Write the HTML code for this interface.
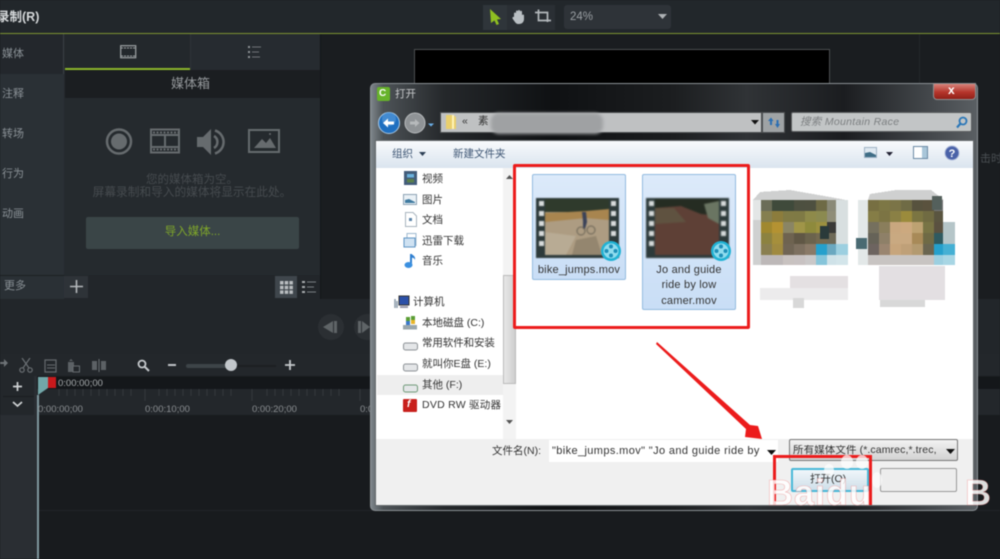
<!DOCTYPE html>
<html><head><meta charset="utf-8"><style>
html,body{margin:0;padding:0;background:#1a1d20;}
#r{position:relative;width:1000px;height:559px;overflow:hidden;background:#1a1d20;font-family:"Liberation Sans","Noto Sans CJK SC",sans-serif;filter:blur(0.45px);}
#r div,#r svg{position:absolute;}
.t{white-space:nowrap;line-height:1;}
.side{left:2px;color:#8a9196;font-size:11px;}
.nav{left:422px;color:#333;font-size:10.5px;}
.file{color:#333;font-size:11px;text-align:center;line-height:15.3px;letter-spacing:.2px;}
</style></head><body><div id="r">
<!-- top bar -->
<div style="left:0;top:0;width:1000px;height:33px;background:#22272b"></div>
<div style="left:0;top:33px;width:1000px;height:1px;background:#7d9331"></div>
<div class="t" style="left:-3px;top:11px;color:#d6d9db;font-size:12.5px;font-weight:bold">录制(R)</div>
<div style="left:483px;top:5px;width:24px;height:25px;background:#2f353a"></div>
<div style="left:507px;top:5px;width:48px;height:25px;background:#2a2f34"></div>
<svg style="left:488px;top:8px" width="15" height="18" viewBox="0 0 15 18"><path d="M2 1L13 11L9 11.500L11 16L8.500 17L6.500 12.500L3 15Z" fill="#8fbf21"/></svg>
<svg style="left:511px;top:8px" width="16" height="17" viewBox="0 0 16 17"><path d="M3 8V5.500a1 1 0 012 0V3.500a1 1 0 012 0V3a1 1 0 012 0v.8a1 1 0 012 0V7.500a1 1 0 012 0V11c0 3-2 5-5 5H7C5 16 4 14 1.500 10.500C1 9 2.500 8.500 3 9Z" fill="#b9bfc3"/></svg>
<svg style="left:534px;top:9px" width="18" height="16" viewBox="0 0 18 16"><path d="M1 3.500H13.500V13M4.500 0.500V11.500H17" fill="none" stroke="#b3b8bc" stroke-width="1.700"/></svg>
<div style="left:564px;top:5px;width:107px;height:24px;background:#2e3338;border-radius:3px"></div>
<div class="t" style="left:570px;top:12px;color:#9a9fa3;font-size:11.500px">24%</div>
<svg style="left:658px;top:14px" width="9" height="6"><path d="M0 0H9L4.500 5Z" fill="#aeb2b5"/></svg>

<!-- left sidebar -->
<div style="left:0;top:34px;width:64px;height:265px;background:#2a3035"></div>
<div style="left:0;top:34px;width:63px;height:40px;background:#23272c"></div>
<div style="left:63px;top:34px;width:1px;height:40px;background:#3a4045"></div>
<div class="t side" style="top:49px">媒体</div>
<div class="t side" style="top:89px">注释</div>
<div class="t side" style="top:129px">转场</div>
<div class="t side" style="top:169px">行为</div>
<div class="t side" style="top:209px">动画</div>
<div style="left:0;top:275px;width:64px;height:1px;background:#1c2023"></div>
<div class="t side" style="left:4px;top:281px">更多</div>

<!-- media panel -->
<div style="left:64px;top:34px;width:256px;height:265px;background:#252a2e"></div>
<div style="left:65px;top:34px;width:125px;height:34px;background:#23282c"></div>
<div style="left:190px;top:34px;width:128px;height:36px;background:#262b30;border-left:1px solid #2e3338"></div>
<div style="left:65px;top:68px;width:125px;height:2px;background:#8cb52b"></div>
<svg style="left:120px;top:45px" width="17" height="14" viewBox="0 0 17 14"><rect x=".7" y=".7" width="15" height="12" fill="none" stroke="#9ea3a6" stroke-width="1.200"/><path d="M1 3H16M1 11H16" stroke="#9ea3a6" stroke-width="1" stroke-dasharray="2 1"/></svg>
<svg style="left:247px;top:45px" width="15" height="15" viewBox="0 0 15 15"><path d="M1 1h2v2H1zM1 6h2v2H1zM1 11h2v2H1z" fill="#8f9498"/><path d="M5 2H14M5 7H12M5 12H13" stroke="#6f7478" stroke-width="1"/></svg>
<div style="left:65px;top:70px;width:255px;height:28px;background:#1b1e21"></div>
<div class="t" style="left:171px;top:77px;color:#94989b;font-size:13px">媒体箱</div>
<svg style="left:105px;top:127px" width="175" height="30" viewBox="0 0 175 30">
<circle cx="14" cy="14.500" r="12" fill="none" stroke="#666b6e" stroke-width="2.500"/><circle cx="14" cy="14.500" r="8" fill="#666b6e"/>
<rect x="46" y="2.500" width="28" height="23" fill="none" stroke="#666b6e" stroke-width="2"/><path d="M47 8H73M47 20H73M60 8V20" stroke="#666b6e" stroke-width="2"/><path d="M48 5.500H73M48 22.500H73" stroke="#666b6e" stroke-width="2" stroke-dasharray="2 1.500"/>
<path d="M92 10H98L106 2V28L98 20H92Z" fill="#666b6e"/><path d="M109 9a7 7 0 010 12M110 3.500a12 12 0 010 23" fill="none" stroke="#666b6e" stroke-width="2.500"/>
<rect x="144" y="3" width="30" height="22" fill="none" stroke="#666b6e" stroke-width="2"/><path d="M149 21L157 12L161 16L165 11L171 21Z" fill="#666b6e"/><circle cx="165" cy="7" r="1" fill="#666b6e"/>
</svg>
<div class="t" style="left:64px;top:175px;width:256px;text-align:center;color:#464b4f;font-size:11.500px">您的媒体箱为空。</div>
<div class="t" style="left:64px;top:187px;width:256px;text-align:center;color:#464b4f;font-size:11.700px">屏幕录制和导入的媒体将显示在此处。</div>
<div style="left:86px;top:217px;width:213px;height:32px;background:#3a4547;border-radius:2px"></div>
<div class="t" style="left:86px;top:227px;width:213px;text-align:center;color:#7fa62a;font-size:11.500px">导入媒体...</div>
<div style="left:64px;top:275px;width:256px;height:24px;background:#22262a"></div>
<div style="left:64px;top:276px;width:24px;height:22px;background:#2e3338"></div>
<svg style="left:69px;top:279px" width="15" height="15"><path d="M7.500 1V14M1 7.500H14" stroke="#b5b9bc" stroke-width="1.600"/></svg>
<div style="left:275px;top:276px;width:22px;height:22px;background:#3f464c"></div>
<svg style="left:280px;top:281px" width="13" height="13"><path d="M0 0h3.500v3.500H0zM4.700 0h3.500v3.500H4.700zM9.400 0h3.500v3.500H9.400zM0 4.700h3.500v3.500H0zM4.700 4.700h3.500v3.500H4.700zM9.400 4.700h3.500v3.500H9.400zM0 9.400h3.500v3.500H0zM4.700 9.400h3.500v3.500H4.700zM9.400 9.400h3.500v3.500H9.400z" fill="#b9bdc0"/></svg>
<svg style="left:302px;top:280px" width="15" height="14"><path d="M0 1h3v2H0zM0 6h3v2H0zM0 11h3v2H0z" fill="#a7abae"/><path d="M5 2H14M5 7H12M5 12H14" stroke="#7a7f83"/></svg>

<!-- canvas -->
<div style="left:320px;top:34px;width:680px;height:265px;background:#1a1d20"></div>
<div style="left:320px;top:34px;width:1px;height:265px;background:#14171a"></div>
<div style="left:414px;top:49px;width:414px;height:40px;background:#000;border:1px solid #4d4f51;border-bottom:none"></div>
<div style="left:919px;top:34px;width:1px;height:265px;background:#22272b"></div>
<div class="t" style="left:980px;top:154px;color:#4a4f53;font-size:11px">击时</div>

<!-- playback strip -->
<div style="left:0;top:299px;width:1000px;height:55px;background:#22262a"></div>
<div style="left:318px;top:314px;width:26px;height:26px;border-radius:13px;background:#2b2f33"></div>
<svg style="left:322px;top:320px" width="16" height="14"><path d="M1 7L11 1V13Z M12 1h3v12h-3z" fill="#5f6467"/></svg>
<div style="left:354px;top:314px;width:16px;height:26px;border-radius:13px 0 0 13px;background:#2b2f33"></div>
<svg style="left:358px;top:320px" width="12" height="14"><path d="M0 1h3v12H0zM4 1L12 7L4 13Z" fill="#5f6467"/></svg>

<!-- timeline toolbar -->
<div style="left:0;top:354px;width:1000px;height:22px;background:#23272b"></div>
<svg style="left:0;top:358px" width="8" height="10"><path d="M0 4H4V1L8 5L4 9V6H0Z" fill="#6d7276"/></svg>
<svg style="left:19px;top:358px" width="14" height="15" viewBox="0 0 14 15" fill="none" stroke="#6a6f73" stroke-width="1.200"><path d="M3 0L10 10M11 0L4 10"/><circle cx="3" cy="12" r="2.200"/><circle cx="11" cy="12" r="2.200"/></svg>
<svg style="left:44px;top:359px" width="14" height="14"><rect x="1" y="1" width="11" height="12" fill="none" stroke="#666b6f" stroke-width="1.200"/><path d="M3 6H11M3 9H11" stroke="#666b6f"/></svg>
<svg style="left:67px;top:358px" width="14" height="15"><path d="M1 4H7V14H1zM4 1L6 3H2Z" fill="#5c6165"/><rect x="6" y="8" width="6.500" height="6" fill="#23272b" stroke="#666b6f"/></svg>
<svg style="left:91px;top:359px" width="16" height="13"><rect x="1" y="2" width="5" height="9" fill="#5c6165"/><rect x="10" y="2" width="5" height="9" fill="#5c6165"/><path d="M8 0V13" stroke="#6d7276"/></svg>
<svg style="left:137px;top:359px" width="13" height="13"><circle cx="5" cy="5" r="3.500" fill="none" stroke="#c5c9cc" stroke-width="1.800"/><path d="M7.500 7.500L12 12" stroke="#c5c9cc" stroke-width="2"/></svg>
<div style="left:168px;top:364px;width:8px;height:2px;background:#bfc3c6"></div>
<div style="left:186px;top:364px;width:45px;height:4px;border-radius:2px;background:#3d4448"></div>
<div style="left:231px;top:365px;width:45px;height:2px;background:#1c1f22"></div>
<div style="left:225px;top:359px;width:12px;height:12px;border-radius:6px;background:#c2c7cb"></div>
<svg style="left:285px;top:360px" width="10" height="10"><path d="M5 0V10M0 5H10" stroke="#c5c9cc" stroke-width="1.800"/></svg>

<!-- timeline -->
<div style="left:0;top:376px;width:37px;height:183px;background:#2a2e33"></div>
<div style="left:0;top:376px;width:34px;height:39px;background:#23272b"></div>
<div style="left:3px;top:396px;width:31px;height:1px;background:#1a1d20"></div>
<svg style="left:12px;top:381px" width="11" height="11"><path d="M5.500 1V10M1 5.500H10" stroke="#d0d3d5" stroke-width="1.700"/></svg>
<svg style="left:12px;top:401px" width="11" height="7"><path d="M1 1L5.500 5L10 1" fill="none" stroke="#d0d3d5" stroke-width="1.700"/></svg>
<div style="left:37px;top:376px;width:963px;height:183px;background:#181b1e"></div>
<div style="left:37px;top:377px;width:963px;height:12px;background:#14171a"></div>
<div style="left:37px;top:389px;width:963px;height:26px;background:#23272b"></div>
<svg style="left:37px;top:389px" width="333" height="12"><path d="M22 0V7M30 0V7M38 0V7M46 0V7M54 0V7M62 0V7M70 0V7M78 0V7M86 0V7M94 0V7M108 0V12M122 0V7M130 0V7M138 0V7M146 0V7M154 0V7M162 0V7M170 0V7M178 0V7M186 0V7M194 0V7M215 0V12M230 0V7M238 0V7M246 0V7M254 0V7M262 0V7M270 0V7M278 0V7M286 0V7M294 0V7M302 0V7M323 0V12" stroke="#34393d"/></svg>
<div style="left:37px;top:510px;width:963px;height:1px;background:#212428"></div>
<svg style="left:38px;top:377px" width="18" height="18"><path d="M0 0H10V11L0 18Z" fill="#72a6a8"/></svg>
<div style="left:48px;top:377px;width:8px;height:11px;background:#c8191c"></div>
<div style="left:37px;top:395px;width:2px;height:164px;background:#7f979e"></div>
<div class="t" style="left:58px;top:379px;color:#a8acae;font-size:9.500px">0:00:00;00</div>
<div class="t" style="left:38px;top:405px;color:#8b8f92;font-size:9.500px">0:00:00;00</div>
<div class="t" style="left:145px;top:405px;color:#8b8f92;font-size:9.500px">0:00:10;00</div>
<div class="t" style="left:252px;top:405px;color:#8b8f92;font-size:9.500px">0:00:20;00</div>
<div class="t" style="left:360px;top:405px;color:#8b8f92;font-size:9.500px">0:00:30;00</div>
<div style="left:975px;top:389px;width:25px;height:26px;background:#23272b"></div>

<!-- dialog -->
<div style="left:370px;top:83px;width:608px;height:428px;border-radius:5px;background:linear-gradient(90deg,#7d858a 0,#4d5357 2%,#25282b 12%,#0f1113 30%,#1c1e20 50%,#303336 62%,#1b1d20 78%,#5a5f63 100%);border:1px solid #8a9094;box-sizing:border-box"></div>
<div style="left:375px;top:103px;width:1px;height:403px;background:#6c7276"></div>
<!-- title -->
<div style="left:377px;top:87px;width:13px;height:14px;background:#67b32a;border-radius:2px"></div>
<div class="t" style="left:379px;top:89px;color:#fff;font-size:10px;font-weight:bold">C</div>
<div class="t" style="left:395px;top:89px;color:#c8cacc;font-size:10.500px">打开</div>
<div style="left:933px;top:83px;width:43px;height:17px;border-radius:0 0 4px 4px;background:linear-gradient(#d8827a,#b5352b 55%,#902018);border:1px solid #8d8f91;box-sizing:border-box"></div>
<div class="t" style="left:948px;top:84px;color:#fff;font-size:12px;font-weight:bold">x</div>
<!-- nav -->
<svg style="left:378px;top:111px" width="58" height="26" viewBox="0 0 58 26">
<circle cx="11" cy="12" r="10.500" fill="#1f6fc0" stroke="#a8c8e4" stroke-width="1"/><circle cx="11" cy="8" r="7" fill="#5b9fdc" opacity=".6"/><path d="M16 10.500H10V7.500L5 12L10 16.500V13.500H16Z" fill="#fff"/>
<circle cx="37" cy="12" r="10" fill="#8f9396" stroke="#b8bbbd"/><path d="M32 10.500H37V8L41.500 12L37 16V13.500H32Z" fill="#b6b9bb"/>
<path d="M50 12.500H56L53 15.500Z" fill="#6cb0ea"/>
</svg>
<div style="left:440px;top:112px;width:322px;height:21px;background:#bfc1c2;border:1px solid #4b4e50;box-sizing:border-box"></div>
<div style="left:762px;top:112px;width:23px;height:21px;background:#9fa3a5;border:1px solid #4b4e50;box-sizing:border-box"></div>
<svg style="left:445px;top:114px" width="12" height="16"><path d="M1 1H8L11 3V15H1Z" fill="#e9cf6d"/><path d="M7 1H9V15H7Z" fill="#fff3b8"/></svg>
<div class="t" style="left:462px;top:116px;color:#333;font-size:10.500px">«</div>
<div class="t" style="left:478px;top:116px;color:#333;font-size:10.500px">素</div>
<div style="left:491px;top:113px;width:112px;height:21px;background:#9fa1a3;border-radius:8px;filter:blur(1.500px)"></div>
<svg style="left:751px;top:120px" width="8" height="5"><path d="M0 0H8L4 4.500Z" fill="#111"/></svg>
<svg style="left:767px;top:116px" width="14" height="13"><path d="M1 5L4 1.500L6.500 5H5V9H3V5ZM8 8H9.500V4H11.500V8H13L10.500 12Z" fill="#2b6fb3"/></svg>
<div style="left:791px;top:112px;width:181px;height:20px;background:#c2c5c6;border:1px solid #5b5e60;border-radius:2px;box-sizing:border-box"></div>
<div class="t" style="left:800px;top:117px;color:#7c7f81;font-size:10.500px;font-style:italic;letter-spacing:.3px">搜索 Mountain Race</div>
<svg style="left:955px;top:116px" width="13" height="13"><circle cx="8" cy="5" r="3.500" fill="none" stroke="#2b77b8" stroke-width="1.800"/><path d="M5.500 7.500L2 11.500" stroke="#2b77b8" stroke-width="2.200"/></svg>
<!-- white body -->
<div style="left:375px;top:140px;width:599px;height:366px;background:#f0f0f0;border:1px solid #63686b;box-sizing:border-box"></div>
<div style="left:376px;top:141px;width:597px;height:27px;background:linear-gradient(#f8fafc,#e6edf4 60%,#dae4ef);border-bottom:1px solid #c7d2de"></div>
<div class="t" style="left:392px;top:149px;color:#3e5674;font-size:10.500px">组织</div>
<svg style="left:419px;top:152px" width="7" height="4"><path d="M0 0H7L3.500 4Z" fill="#2d3f55"/></svg>
<div class="t" style="left:453px;top:149px;color:#3e5674;font-size:10.500px">新建文件夹</div>
<svg style="left:864px;top:147px" width="14" height="13"><rect x=".5" y=".5" width="12" height="10" fill="#dfe9f1" stroke="#9fb3c5"/><path d="M1 6L6 5L12 8V10H1Z" fill="#3f6d86"/></svg>
<svg style="left:886px;top:152px" width="7" height="4"><path d="M0 0H7L3.500 4Z" fill="#223"/></svg>
<svg style="left:913px;top:146px" width="15" height="14"><rect x=".5" y=".5" width="14" height="12" fill="#fff" stroke="#6b8aa5"/><rect x="9" y="1" width="5" height="11" fill="#a9c6d9"/></svg>
<svg style="left:944px;top:145px" width="16" height="16"><circle cx="8" cy="8" r="7" fill="#4a62a8" stroke="#aab7d8"/><text x="8" y="12" font-size="11" font-weight="bold" fill="#fff" text-anchor="middle" font-family="Liberation Sans">?</text></svg>
<!-- nav pane -->
<div style="left:376px;top:168px;width:597px;height:271px;background:#fff"></div>
<div style="left:503px;top:168px;width:13px;height:271px;background:#f3f3f3"></div>
<div style="left:503px;top:275px;width:13px;height:109px;background:linear-gradient(90deg,#e8e8e8,#cfcfcf);border:1px solid #bbb;box-sizing:border-box"></div>
<svg style="left:506px;top:175px" width="7" height="4"><path d="M0 4H7L3.500 0Z" fill="#555"/></svg>
<svg style="left:506px;top:420px" width="7" height="4"><path d="M0 0H7L3.500 4Z" fill="#555"/></svg>
<div style="left:377px;top:375px;width:126px;height:20px;background:#eeeeee"></div>
<svg style="left:404px;top:171px" width="13" height="14"><rect width="13" height="14" fill="#435d7a"/><rect x="3" y="3" width="7" height="3.500" fill="#6bb2dd"/><rect x="3" y="8" width="7" height="3.500" fill="#5a7f4c"/></svg>
<svg style="left:403px;top:194px" width="14" height="11"><rect x=".5" y=".5" width="13" height="10" fill="#eaf1f6" stroke="#8ca2b4"/><path d="M2 9V6L6 5L12 8V9Z" fill="#3f7aa0"/></svg>
<svg style="left:405px;top:212px" width="12" height="15"><path d="M.5.5H8L11.500 4V14.500H.5Z" fill="#fff" stroke="#a8b4be"/><rect x="4" y="6" width="3" height="3" fill="#5a83a8"/></svg>
<svg style="left:403px;top:233px" width="15" height="15"><rect x="4" y=".5" width="9" height="12" fill="#fff" stroke="#9db8cf"/><rect x="1" y="5" width="11" height="9" fill="#cfe2f2" stroke="#5e94c3"/></svg>
<svg style="left:404px;top:253px" width="13" height="16"><path d="M7 1V11.500" stroke="#2f7fd0" stroke-width="2"/><ellipse cx="4.500" cy="12" rx="4" ry="3" fill="#3b90e0"/><path d="M7 1Q12 3 11 7Q10 4 7 5Z" fill="#2f7fd0"/></svg>
<div class="t nav" style="top:174px">视频</div>
<div class="t nav" style="top:195px">图片</div>
<div class="t nav" style="top:215px">文档</div>
<div class="t nav" style="top:236px">迅雷下载</div>
<div class="t nav" style="top:256px">音乐</div>
<svg style="left:394px;top:295px" width="16" height="14"><rect x="5" y="1" width="10" height="9" fill="#2b50a8" stroke="#333"/><path d="M1 4V13M3 6V13" stroke="#8a9aa8" stroke-width="1.500"/><rect x="6" y="11" width="8" height="2" fill="#99a"/></svg>
<div class="t nav" style="left:413px;top:297px">计算机</div>
<svg style="left:403px;top:315px" width="15" height="15"><rect x="0" y="10" width="14" height="4.500" fill="#9aa7ad"/><path d="M3 2H7V6H3zM8 1H12V5H8z" fill="#5b9e35"/><path d="M3 6H7V10H3z" fill="#3a78c9"/><path d="M8 5H12V9H8z" fill="#e8b52a"/></svg>
<div class="t nav" style="top:318px">本地磁盘 (C:)</div>
<svg style="left:403px;top:342px" width="15" height="9"><rect x=".5" y="1" width="14" height="7" rx="2" fill="#e4e6e8" stroke="#8d9296"/></svg>
<div class="t nav" style="top:338px;letter-spacing:-.1px">常用软件和安装</div>
<svg style="left:403px;top:363px" width="15" height="9"><rect x=".5" y="1" width="14" height="7" rx="2" fill="#e4e6e8" stroke="#8d9296"/></svg>
<div class="t nav" style="top:359px">就叫你E盘 (E:)</div>
<svg style="left:403px;top:384px" width="15" height="9"><rect x=".5" y="1" width="14" height="7" rx="2" fill="#e4e6e8" stroke="#6f9a78"/></svg>
<div class="t nav" style="top:380px">其他 (F:)</div>
<div style="left:403px;top:399px;width:14px;height:13px;background:#c8201c;border-radius:1px"></div>
<div class="t" style="left:407px;top:400px;color:#fff;font-size:10px;font-weight:bold;font-style:italic">f</div>
<div class="t nav" style="top:400px;width:81px;overflow:hidden;letter-spacing:.25px">DVD RW 驱动器</div>

<!-- file items -->
<div style="left:532px;top:174px;width:94px;height:106px;background:linear-gradient(#dceafa,#c9def6);border:1px solid #93bbdf;border-radius:2px;box-sizing:border-box"></div>
<div style="left:642px;top:174px;width:94px;height:136px;background:linear-gradient(#dceafa,#c9def6);border:1px solid #93bbdf;border-radius:2px;box-sizing:border-box"></div>
<!-- thumb 1 -->
<svg style="left:536px;top:198px;filter:blur(.6px)" width="83" height="60" viewBox="0 0 83 60">
<rect width="83" height="60" fill="#2d3a3a"/>
<rect x="9" y="1" width="64" height="56" fill="#ad9c82"/>
<rect x="9" y="1" width="64" height="13" fill="#2f3a2c"/>
<path d="M9 15L32 14L50 13L73 11V22L50 20L9 24Z" fill="#a8854f"/>
<path d="M9 34L40 38L30 57H9Z" fill="#b8ab94"/>
<path d="M40 42L60 38L66 57H36Z" fill="#94866f"/>
<path d="M46 14H50L51 24L49 31H47L47 23Z" fill="#3a4258"/>
<circle cx="45" cy="33" r="4" fill="none" stroke="#6a6455"/><circle cx="55" cy="32" r="4" fill="none" stroke="#6a6455"/>
<path d="M3 3h5v5H3zM3 13h5v5H3zM3 23h5v5H3zM3 33h5v5H3zM3 43h5v5H3zM75 3h5v5h-5zM75 13h5v5h-5zM75 23h5v5h-5zM75 33h5v5h-5z" fill="#d8dcdc"/>
</svg>
<svg style="left:600px;top:241px" width="22" height="21" viewBox="0 0 22 21"><circle cx="11" cy="10" r="10" fill="#21b2d4"/><circle cx="11" cy="10" r="7.500" fill="#8fdcee"/><g fill="#1e8fb8"><circle cx="11" cy="5.500" r="2"/><circle cx="11" cy="14.500" r="2"/><circle cx="6.500" cy="10" r="2"/><circle cx="15.500" cy="10" r="2"/></g></svg>
<!-- thumb 2 -->
<svg style="left:646px;top:198px;filter:blur(.8px)" width="83" height="60" viewBox="0 0 83 60">
<rect width="83" height="60" fill="#2d3a3a"/>
<rect x="9" y="1" width="64" height="56" fill="#5e4036"/>
<path d="M9 1H73V18L55 16L35 8L9 10Z" fill="#252c22"/>
<path d="M58 6L73 3V26L62 20Z" fill="#6a7562"/>
<path d="M9 10L28 10L40 24L9 26Z" fill="#5f5240"/>
<path d="M3 3h5v5H3zM3 13h5v5H3zM3 23h5v5H3zM3 33h5v5H3zM3 43h5v5H3zM75 3h5v5h-5zM75 13h5v5h-5zM75 23h5v5h-5zM75 33h5v5h-5z" fill="#d8dcdc"/>
</svg>
<svg style="left:710px;top:241px" width="22" height="21" viewBox="0 0 22 21"><circle cx="11" cy="10" r="10" fill="#21b2d4"/><circle cx="11" cy="10" r="7.500" fill="#8fdcee"/><g fill="#1e8fb8"><circle cx="11" cy="5.500" r="2"/><circle cx="11" cy="14.500" r="2"/><circle cx="6.500" cy="10" r="2"/><circle cx="15.500" cy="10" r="2"/></g></svg>
<div class="t file" style="left:532px;top:263px;width:94px">bike_jumps.mov</div>
<div class="t file" style="left:642px;top:263px;width:94px">Jo and guide<br>ride by low<br>camer.mov</div>
<!-- pixelated thumb A: origin 750,188 -->
<svg style="left:750px;top:188px" width="100" height="122" viewBox="0 0 100 122" shape-rendering="crispEdges">
<path d="M3 12L10 4L40 2L80 9L96 12V77H3Z" fill="#cfd0d0"/>
<rect x="3" y="12" width="8" height="20" fill="#e3e6e6"/><rect x="86" y="12" width="12" height="44" fill="#d8dfe0"/>
<g transform="translate(11 12)">
<rect x="0" y="0" width="11" height="11" fill="#6b6d58"/><rect x="11" y="0" width="11" height="11" fill="#3f4a3b"/><rect x="22" y="0" width="11" height="11" fill="#3f4a3b"/><rect x="33" y="0" width="11" height="11" fill="#4d5040"/><rect x="44" y="0" width="11" height="11" fill="#4e5040"/><rect x="55" y="0" width="11" height="11" fill="#6e6a45"/><rect x="66" y="0" width="9" height="11" fill="#8a8a78"/>
<rect x="0" y="11" width="11" height="11" fill="#857f50"/><rect x="11" y="11" width="11" height="11" fill="#8c7c3c"/><rect x="22" y="11" width="11" height="11" fill="#807a45"/><rect x="33" y="11" width="11" height="11" fill="#7f7a45"/><rect x="44" y="11" width="11" height="11" fill="#8e8a4a"/><rect x="55" y="11" width="11" height="11" fill="#8b8a50"/><rect x="66" y="11" width="9" height="11" fill="#8f8d78"/>
<rect x="0" y="22" width="11" height="11" fill="#a0882f"/><rect x="11" y="22" width="11" height="11" fill="#b49232"/><rect x="22" y="22" width="11" height="11" fill="#8a8565"/><rect x="33" y="22" width="11" height="11" fill="#a09548"/><rect x="44" y="22" width="11" height="11" fill="#8e8a3c"/><rect x="55" y="22" width="11" height="11" fill="#9b9040"/><rect x="66" y="22" width="9" height="11" fill="#3a3a38"/>
<rect x="0" y="33" width="11" height="11" fill="#8c8240"/><rect x="11" y="33" width="11" height="11" fill="#a68f3c"/><rect x="22" y="33" width="11" height="11" fill="#6e6350"/><rect x="33" y="33" width="11" height="11" fill="#605745"/><rect x="44" y="33" width="11" height="11" fill="#6b634d"/><rect x="55" y="33" width="11" height="11" fill="#746a50"/><rect x="66" y="33" width="9" height="11" fill="#6e6a58"/>
<rect x="0" y="44" width="11" height="11" fill="#8a7f50"/><rect x="11" y="44" width="11" height="11" fill="#a08a40"/><rect x="22" y="44" width="11" height="11" fill="#706555"/><rect x="33" y="44" width="11" height="11" fill="#7d7060"/><rect x="44" y="44" width="11" height="11" fill="#8a7a68"/><rect x="55" y="44" width="11" height="11" fill="#25a0cc"/><rect x="66" y="44" width="9" height="11" fill="#6aa8c0"/>
<rect x="0" y="55" width="11" height="10" fill="#bdb8b8"/><rect x="11" y="55" width="11" height="10" fill="#bdb8b8"/><rect x="22" y="55" width="11" height="10" fill="#c8c2c0"/><rect x="33" y="55" width="11" height="10" fill="#c8c2c2"/><rect x="44" y="55" width="11" height="10" fill="#cac8c8"/><rect x="55" y="55" width="11" height="10" fill="#86c5da"/><rect x="66" y="55" width="9" height="10" fill="#cfe2e8"/>
</g>
<rect x="86" y="56" width="12" height="11" fill="#9ccfe0"/><rect x="86" y="67" width="12" height="10" fill="#d3e5ea"/>
<rect x="70" y="38" width="9" height="13" fill="#2a3a3a"/>
<rect x="40" y="88" width="58" height="12" fill="#e4e0e2"/><rect x="10" y="100" width="88" height="12" fill="#ecebec"/><rect x="43" y="110" width="11" height="10" fill="#d8d8d8"/>
</svg>
<!-- pixelated thumb B: origin 856,188 -->
<svg style="left:856px;top:188px" width="102" height="124" viewBox="0 0 102 124" shape-rendering="crispEdges">
<path d="M12 12L14 6L40 2L75 2L88 12Z" fill="#cfd0d0"/>
<rect x="2" y="12" width="10" height="65" fill="#e3e8e8"/>
<rect x="87" y="34" width="12" height="22" fill="#b5c5c8"/><rect x="87" y="56" width="12" height="11" fill="#45b0d4"/><rect x="87" y="67" width="12" height="10" fill="#a8d6e4"/>
<g transform="translate(12 12)">
<rect x="0" y="0" width="11" height="11" fill="#776f42"/><rect x="11" y="0" width="11" height="11" fill="#7d7745"/><rect x="22" y="0" width="11" height="11" fill="#7b7447"/><rect x="33" y="0" width="11" height="11" fill="#6f6b45"/><rect x="44" y="0" width="11" height="11" fill="#57523e"/><rect x="55" y="0" width="11" height="11" fill="#5a523e"/><rect x="66" y="0" width="9" height="11" fill="#777"/>
<rect x="0" y="11" width="11" height="11" fill="#857d46"/><rect x="11" y="11" width="11" height="11" fill="#7c7444"/><rect x="22" y="11" width="11" height="11" fill="#8a8045"/><rect x="33" y="11" width="11" height="11" fill="#9b8b3c"/><rect x="44" y="11" width="11" height="11" fill="#7b7542"/><rect x="55" y="11" width="11" height="11" fill="#706b42"/><rect x="66" y="11" width="9" height="11" fill="#5a5540"/>
<rect x="0" y="22" width="11" height="11" fill="#75705e"/><rect x="11" y="22" width="11" height="11" fill="#8a7e5c"/><rect x="22" y="22" width="11" height="11" fill="#c9a77f"/><rect x="33" y="22" width="11" height="11" fill="#cca97f"/><rect x="44" y="22" width="11" height="11" fill="#bda272"/><rect x="55" y="22" width="11" height="11" fill="#787445"/><rect x="66" y="22" width="9" height="11" fill="#5a5140"/>
<rect x="0" y="33" width="11" height="11" fill="#666358"/><rect x="11" y="33" width="11" height="11" fill="#8e8068"/><rect x="22" y="33" width="11" height="11" fill="#c9a981"/><rect x="33" y="33" width="11" height="11" fill="#c9a981"/><rect x="44" y="33" width="11" height="11" fill="#a88a58"/><rect x="55" y="33" width="11" height="11" fill="#6f6a45"/><rect x="66" y="33" width="9" height="11" fill="#2f5a60"/>
<rect x="0" y="44" width="11" height="11" fill="#6d6460"/><rect x="11" y="44" width="11" height="11" fill="#9a8570"/><rect x="22" y="44" width="11" height="11" fill="#c7a57c"/><rect x="33" y="44" width="11" height="11" fill="#bfa078"/><rect x="44" y="44" width="11" height="11" fill="#b39a70"/><rect x="55" y="44" width="11" height="11" fill="#6a6550"/><rect x="66" y="44" width="9" height="11" fill="#25a0cc"/>
<rect x="0" y="55" width="75" height="10" fill="#c8c4c2"/><rect x="66" y="55" width="9" height="10" fill="#9ccfe0"/>
</g>
<rect x="0" y="50" width="11" height="11" fill="#4a6a72"/><rect x="76" y="8" width="10" height="14" fill="#54605c"/>
<rect x="23" y="78" width="66" height="34" fill="#e3dfe2"/><rect x="24" y="112" width="45" height="7" fill="#d8d8d8"/>
</svg>
<!-- red annotations -->
<div style="left:513px;top:164px;width:237px;height:165px;border:3px solid #ec1c1c;border-radius:2px;box-sizing:border-box"></div>
<svg style="left:650px;top:335px" width="130" height="112" viewBox="0 0 130 112"><path d="M7 7L100 90L108 91L112 104L95 102L96 94L6 9Z" fill="#ec1c1c"/></svg>
<!-- bottom fields -->
<div class="t" style="left:492px;top:446px;color:#333;font-size:10.500px">文件名(N):</div>
<div style="left:549px;top:440px;width:229px;height:22px;background:#fff"></div>
<div class="t" style="left:552px;top:446px;color:#333;font-size:11px;letter-spacing:.38px">"bike_jumps.mov" "Jo and guide ride by</div>
<svg style="left:767px;top:450px" width="9" height="5"><path d="M0 0H9L4.500 5Z" fill="#111"/></svg>
<div style="left:789px;top:439px;width:169px;height:22px;background:linear-gradient(#f2f2f2,#d2d2d2);border:1px solid #777;border-radius:2px;box-sizing:border-box"></div>
<div class="t" style="left:793px;top:445px;color:#333;font-size:10.500px;width:150px;overflow:hidden;letter-spacing:.1px">所有媒体文件 (*.camrec,*.trec,</div>
<svg style="left:946px;top:449px" width="9" height="5"><path d="M0 0H9L4.500 5Z" fill="#111"/></svg>
<div style="left:791px;top:468px;width:78px;height:24px;background:linear-gradient(#f0f6fa,#cfdfe9);border:2px solid #48b8d8;border-radius:2px;box-sizing:border-box"></div>
<div class="t" style="left:810px;top:474px;color:#333;font-size:10.500px">打开(O)</div>
<div style="left:880px;top:468px;width:77px;height:24px;background:#ededed;border:1px solid #999;border-radius:2px;box-sizing:border-box"></div>
<div style="left:773px;top:455px;width:99px;height:50px;border:3px solid #ec1c1c;border-bottom:none;box-sizing:border-box"></div>
<!-- baidu watermark -->
<svg style="left:760px;top:450px" width="240" height="60" viewBox="0 0 240 60">
<g fill="#fff" opacity=".72"><ellipse cx="87" cy="12" rx="6" ry="7"/><ellipse cx="102" cy="12" rx="6" ry="7"/><ellipse cx="69" cy="20" rx="5" ry="6"/><ellipse cx="117" cy="30" rx="5" ry="8"/></g>
<text x="7" y="55" font-family="Liberation Sans" font-weight="bold" font-size="36" fill="#fff" fill-opacity=".82" stroke="#ec6a6a" stroke-opacity=".45" stroke-width=".6" letter-spacing="1">Baidu</text>
<text x="205" y="55" font-family="Liberation Sans" font-weight="bold" font-size="36" fill="#fff" fill-opacity=".85" stroke="#ec6a6a" stroke-opacity=".45" stroke-width=".6">B</text>
</svg>
</div></body></html>
